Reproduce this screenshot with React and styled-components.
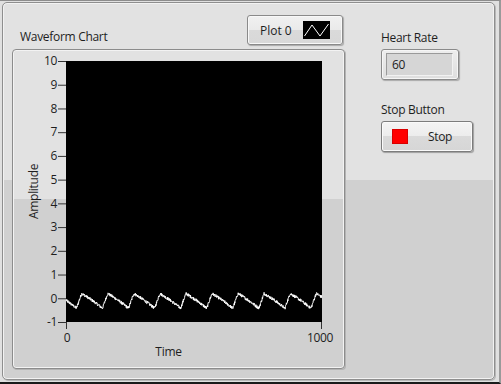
import React from "react";
import styled, { createGlobalStyle } from "styled-components";

const Global = createGlobalStyle`
  html, body { margin: 0; padding: 0; background: #dedede; }
  body { font-family: "Open Sans", "Noto Sans", sans-serif; font-size: 12px; color: #1e1e1e; }
  #root { width: 501px; height: 384px; }
`;

const Window = styled.div`
  box-sizing: border-box;
  width: 501px;
  height: 384px;
  padding: 1px 0 0 2px;
  background: #e0e0e0;
  border-top: 1px solid #8c8c8c;
  border-bottom: 2px solid #1a1a1a;
  border-right: 2px solid #9a9a9a;
`;

const Panel = styled.div`
  box-sizing: border-box;
  width: 493px;
  height: 378px;
  border: 1px solid #8e8e8e;
  border-radius: 5px;
  box-shadow: inset 0 0 0 1px #f2f2f2, 1px 1px 0 #b8b8b8;
  background: linear-gradient(to bottom, #e2e2e2 0, #e2e2e2 47%, #d0d0d0 47%, #d0d0d0 100%);
  padding: 12px 0 0 9px;
  display: flex;
  gap: 36px;
`;

const ChartColumn = styled.div`
  width: 333px;
  display: flex;
  flex-direction: column;
  gap: 4px;
`;

const ChartHeader = styled.div`
  display: flex;
  justify-content: space-between;
  align-items: flex-end;
  padding: 0 2px 0 8px;
  height: 30px;
`;

const Label = styled.div`
  line-height: 14px;
  letter-spacing: -0.3px;
  white-space: nowrap;
  margin-bottom: ${(p) => p.$mb || 0}px;
`;

const Legend = styled.div`
  box-sizing: border-box;
  width: 96px;
  height: 30px;
  border: 1px solid #8a8a8a;
  border-radius: 3px;
  background: linear-gradient(to bottom, #f1f1f1 0, #eaeaea 50%, #dadada 50%, #d8d8d8 100%);
  box-shadow: inset 0 0 0 1px #f8f8f8, 1px 1px 1px rgba(0, 0, 0, 0.25);
  display: flex;
  align-items: center;
  padding-left: 12px;
  gap: 11px;
`;

const LegendSwatch = styled.svg`
  display: block;
  width: 27px;
  height: 18px;
  background: #000;
`;

const Frame = styled.div`
  box-sizing: border-box;
  width: 333px;
  height: 320px;
  border: 1px solid #8c8c8c;
  border-radius: 4px;
  box-shadow: inset 0 0 0 1px #f3f3f3, 1px 1px 0 #b4b4b4;
  background: linear-gradient(to bottom, #e2e2e2 0, #e2e2e2 47%, #d0d0d0 47%, #d0d0d0 100%);
  padding: 3px 0 0 14px;
  display: grid;
  grid-template-columns: 14px 301px;
  grid-template-rows: 292px 14px;
`;

const YTitle = styled.div`
  writing-mode: vertical-rl;
  transform: rotate(180deg);
  line-height: 14px;
  letter-spacing: -0.3px;
  text-align: center;
  padding-top: ${(p) => p.$lift}px;
  box-sizing: border-box;
`;

const XTitle = styled.div`
  grid-column: 2;
  line-height: 14px;
  letter-spacing: -0.3px;
  text-align: center;
  padding-right: 46px;
`;

const RightColumn = styled.div`
  display: flex;
  flex-direction: column;
  padding-top: 16px;
  width: 95px;
`;

const Indicator = styled.div`
  box-sizing: border-box;
  margin-top: 4px;
  width: 78px;
  height: 31px;
  border: 1px solid #8a8a8a;
  border-radius: 3px;
  background: linear-gradient(to bottom, #eeeeee, #dedede);
  box-shadow: inset 0 0 0 1px #f6f6f6, 1px 1px 1px rgba(0, 0, 0, 0.25);
  padding: 3px 5px 3px 4px;
`;

const Field = styled.div`
  box-sizing: border-box;
  height: 23px;
  background: #d6d6d6;
  border-top: 1px solid #9a9a9a;
  border-left: 1px solid #9a9a9a;
  border-right: 1px solid #f2f2f2;
  border-bottom: 1px solid #f2f2f2;
  padding-left: 5px;
  line-height: 21px;
  letter-spacing: -0.3px;
`;

const StopLabel = styled(Label)`
  margin-top: 23px;
`;

const Button = styled.div`
  box-sizing: border-box;
  margin-top: 4px;
  width: 92px;
  height: 31px;
  border: 1px solid #7c7c7c;
  border-radius: 3px;
  background: linear-gradient(to bottom, #f4f4f4 0, #ececec 50%, #dadada 50%, #d6d6d6 100%);
  box-shadow: inset 0 0 0 1px #fafafa, 1px 1px 1px rgba(0, 0, 0, 0.3);
  display: flex;
  align-items: center;
  padding-left: 10px;
`;

const RedLight = styled.div`
  width: 16px;
  height: 15px;
  background: #ff0000;
  box-shadow: inset 0 0 0 1px #d80000;
  flex: none;
`;

const ButtonText = styled.div`
  flex: 1;
  text-align: center;
  letter-spacing: -0.3px;
  line-height: 14px;
`;

// ---- chart data ----
const PLOT_X = 25;
const PLOT_Y = 8;
const PLOT_W = 256;
const PLOT_H = 261;
const yOf = (v) => PLOT_Y + ((10 - v) * PLOT_H) / 11;

function buildWave() {
  let seed = 12345;
  const rnd = () => {
    seed = (seed * 1103515245 + 12345) & 0x7fffffff;
    return seed / 0x7fffffff;
  };
  const period = 101.7;
  const peak = 0.2;
  const trough = -0.42;
  const pts = [];
  for (let i = 0; i < 1000; i++) {
    let p = ((i - 61) / period) % 1;
    if (p < 0) p += 1;
    let v;
    if (p < 0.8) {
      const q = p / 0.8;
      v = peak - (peak - trough) * (0.85 * q + 0.15 * q * q);
    } else v = trough + (peak - trough) * ((p - 0.8) / 0.2);
    v += (rnd() - 0.5) * 0.13;
    const x = PLOT_X + (i * PLOT_W) / 999;
    pts.push(`${x.toFixed(2)},${yOf(v).toFixed(2)}`);
  }
  return pts.join(" ");
}
const WAVE = buildWave();
const TICKS = [10, 9, 8, 7, 6, 5, 4, 3, 2, 1, 0, -1];

const ChartSvg = styled.svg`
  display: block;
  font-family: "Open Sans", "Noto Sans", sans-serif;
  font-size: 12px;
  letter-spacing: -0.3px;
`;

function Chart() {
  return (
    <ChartSvg width="301" height="292" viewBox="0 0 301 292">
      <defs>
        <clipPath id="plotClip">
          <rect x={PLOT_X} y={PLOT_Y} width={PLOT_W} height={PLOT_H} />
        </clipPath>
      </defs>
      <rect x={PLOT_X} y={PLOT_Y} width={PLOT_W} height={PLOT_H} fill="#000" />
      {TICKS.map((t) => (
        <g key={t}>
          <line x1="17" x2={PLOT_X} y1={yOf(t) + 0.5} y2={yOf(t) + 0.5} stroke="#333" strokeWidth="1" />
          <text x="16" y={yOf(t) + 4.3} textAnchor="end" fill="#1e1e1e">
            {t}
          </text>
        </g>
      ))}
      <line x1={PLOT_X + 0.5} x2={PLOT_X + 0.5} y1={PLOT_Y + PLOT_H} y2={PLOT_Y + PLOT_H + 7} stroke="#333" />
      <line x1={PLOT_X + PLOT_W - 0.5} x2={PLOT_X + PLOT_W - 0.5} y1={PLOT_Y + PLOT_H} y2={PLOT_Y + PLOT_H + 7} stroke="#333" />
      <text x={PLOT_X + 1} y="289" textAnchor="middle" fill="#1e1e1e">0</text>
      <text x={PLOT_X + PLOT_W - 2} y="289" textAnchor="middle" fill="#1e1e1e">1000</text>
      <polyline points={WAVE} fill="none" stroke="#fff" strokeWidth="1" clipPath="url(#plotClip)" />
    </ChartSvg>
  );
}

export default function App() {
  return (
    <>
      <Global />
      <Window>
        <Panel>
          <ChartColumn>
            <ChartHeader>
              <Label $mb={1}>Waveform Chart</Label>
              <Legend>
                <span>Plot 0</span>
                <LegendSwatch viewBox="0 0 27 18">
                  <polyline points="1.5,15 9,4 17,15 25.5,3" fill="none" stroke="#fff" strokeWidth="1" />
                </LegendSwatch>
              </Legend>
            </ChartHeader>
            <Frame>
              <YTitle $lift={15}>Amplitude</YTitle>
              <Chart />
              <XTitle>Time</XTitle>
            </Frame>
          </ChartColumn>
          <RightColumn>
            <Label>Heart Rate</Label>
            <Indicator>
              <Field>60</Field>
            </Indicator>
            <StopLabel>Stop Button</StopLabel>
            <Button>
              <RedLight />
              <ButtonText>Stop</ButtonText>
            </Button>
          </RightColumn>
        </Panel>
      </Window>
    </>
  );
}
